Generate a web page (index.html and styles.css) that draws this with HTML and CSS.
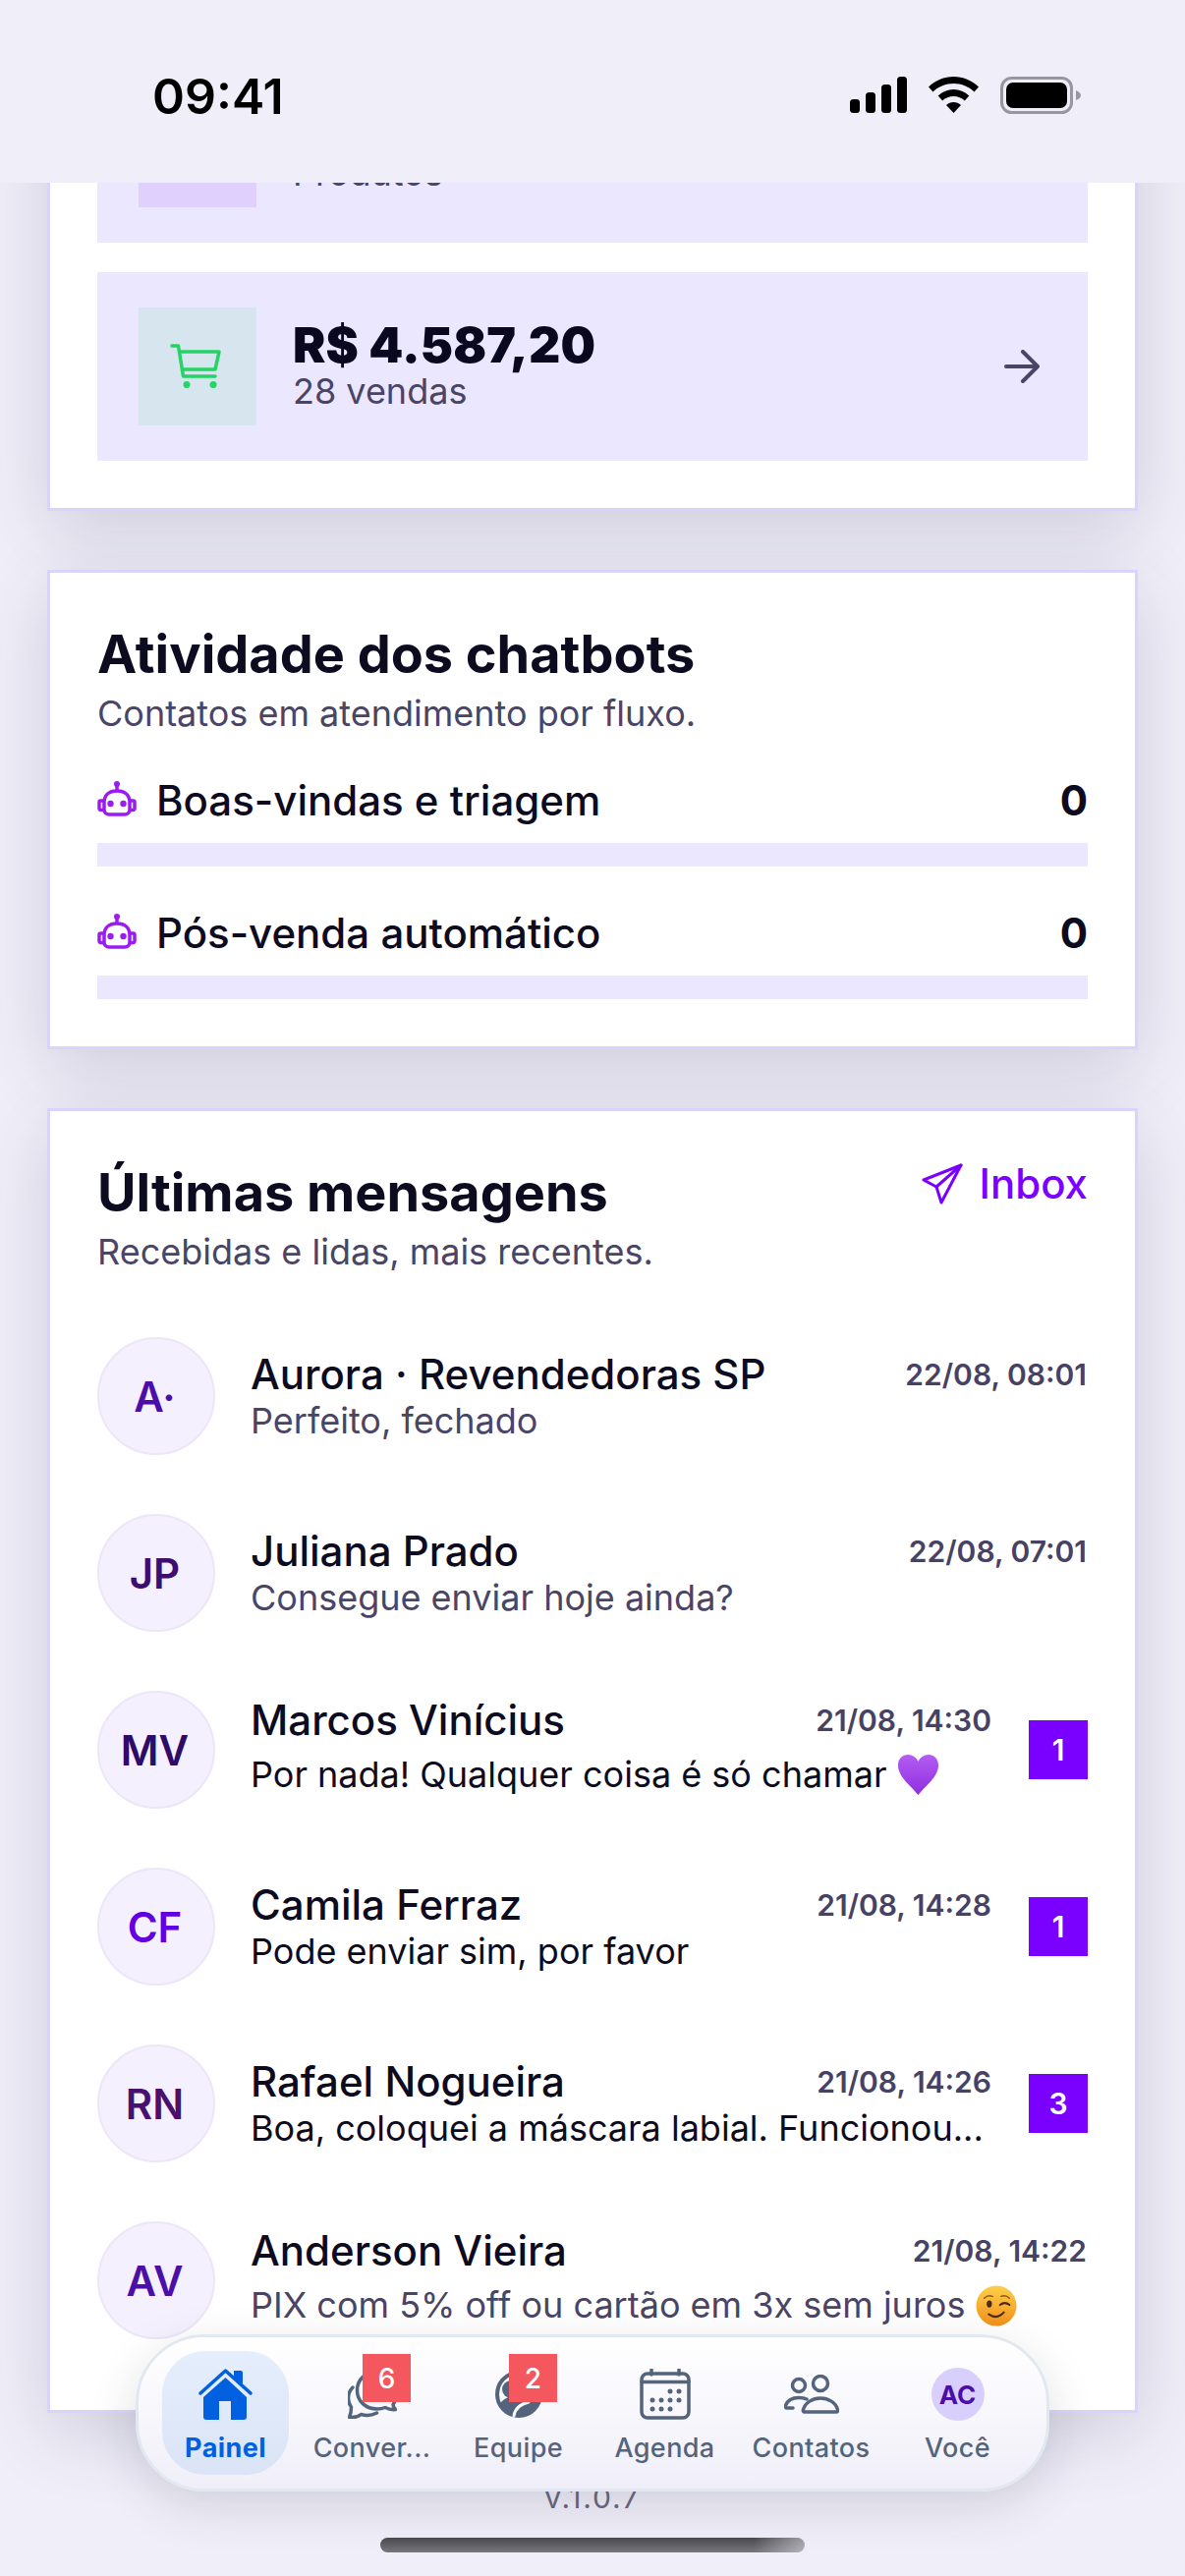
FILE: index.html
```html
<!DOCTYPE html>
<html lang="pt-BR">
  <head>
    <meta charset="utf-8" />
    <meta name="viewport" content="width=device-width, initial-scale=1.0" />
    <title>Painel</title>
    <link rel="stylesheet" href="styles.css">
  </head>
  <body>
    <div class="phone">
      <main class="page">
        <section class="card card-stats">
          <div class="stat">
            <div class="stat-icon stat-icon-purple"></div>
            <div class="stat-text">
              <div class="stat-value">146</div>
              <div class="stat-label">Produtos</div>
            </div>
          </div>
          <div class="stat">
            <div class="stat-icon stat-icon-green">
              <svg class="cart" width="52" height="46" viewBox="0 0 52 46" fill="none" stroke="#25d366" stroke-width="3.500" stroke-linecap="round" stroke-linejoin="round">
                <path d="M2 2h6.500L13.500 33H46" />
                <path d="M9.500 8H50l-4 18H12.500" />
                <circle cx="17" cy="41.500" r="3.500" fill="#25d366" stroke="none" />
                <circle cx="44" cy="41.500" r="3.500" fill="#25d366" stroke="none" />
              </svg>
            </div>
            <div class="stat-text">
              <div class="stat-value">R$ 4.587,20</div>
              <div class="stat-label">28 vendas</div>
            </div>
            <svg class="stat-arrow" width="36" height="34" viewBox="0 0 36 34" fill="none" stroke="#4a4466" stroke-width="4" stroke-linecap="round" stroke-linejoin="round">
              <path d="M2 17h32M19 2l15 15-15 15" />
            </svg>
          </div>
        </section>

        <section class="card card-bots">
          <h2 class="card-title">Atividade dos chatbots</h2>
          <p class="card-sub">Contatos em atendimento por fluxo.</p>
          <div class="bot">
            <div class="bot-row">
              <svg class="bot-icon" width="40" height="36" viewBox="0 0 40 36"><use href="#robot" /></svg>
              <span class="bot-name">Boas-vindas e triagem</span>
              <span class="bot-count">0</span>
            </div>
            <div class="bot-bar"></div>
          </div>
          <div class="bot">
            <div class="bot-row">
              <svg class="bot-icon" width="40" height="36" viewBox="0 0 40 36"><use href="#robot" /></svg>
              <span class="bot-name">Pós-venda automático</span>
              <span class="bot-count">0</span>
            </div>
            <div class="bot-bar"></div>
          </div>
        </section>

        <section class="card card-messages">
          <div class="messages-head">
            <h2 class="card-title">Últimas mensagens</h2>
            <a class="inbox-link">
              <svg width="42" height="42" viewBox="0 0 42 42" fill="none" stroke="#7a00ff" stroke-width="3" stroke-linejoin="round" stroke-linecap="round">
                <path d="M40 2 2 17l13 7 5 16z" />
                <path d="M40 2 15 24" />
              </svg>
              Inbox
            </a>
          </div>
          <p class="card-sub">Recebidas e lidas, mais recentes.</p>

          <ul class="msg-list">
            <li class="msg">
              <div class="avatar avatar-a">A·</div>
              <div class="msg-body">
                <div class="msg-top"><span class="msg-name">Aurora · Revendedoras SP</span><span class="msg-time">22/08, 08:01</span></div>
                <div class="msg-text">Perfeito, fechado</div>
              </div>
            </li>
            <li class="msg">
              <div class="avatar avatar-b">JP</div>
              <div class="msg-body">
                <div class="msg-top"><span class="msg-name">Juliana Prado</span><span class="msg-time">22/08, 07:01</span></div>
                <div class="msg-text">Consegue enviar hoje ainda?</div>
              </div>
            </li>
            <li class="msg unread">
              <div class="avatar avatar-c">MV</div>
              <div class="msg-body">
                <div class="msg-top"><span class="msg-name">Marcos Vinícius</span><span class="msg-time">21/08, 14:30</span></div>
                <div class="msg-text msg-text-tall">Por nada! Qualquer coisa é só chamar
                  <svg class="emoji" width="43" height="43" viewBox="0 0 44 44">
                    <defs>
                      <linearGradient id="heart" x1="0" y1="0" x2="0" y2="1">
                        <stop offset="0" stop-color="#b45cf2" />
                        <stop offset="1" stop-color="#8f2fe0" />
                      </linearGradient>
                    </defs>
                    <path d="M22 43C14 33 1 24 1 12 1 5 6 1 11.500 1 16 1 20 4 22 8c2-4 6-7 10.500-7C38 1 43 5 43 12c0 12-13 21-21 31z" fill="url(#heart)" />
                  </svg>
                </div>
              </div>
              <span class="msg-badge">1</span>
            </li>
            <li class="msg unread">
              <div class="avatar avatar-d">CF</div>
              <div class="msg-body">
                <div class="msg-top"><span class="msg-name">Camila Ferraz</span><span class="msg-time">21/08, 14:28</span></div>
                <div class="msg-text">Pode enviar sim, por favor</div>
              </div>
              <span class="msg-badge">1</span>
            </li>
            <li class="msg unread">
              <div class="avatar avatar-e">RN</div>
              <div class="msg-body">
                <div class="msg-top"><span class="msg-name">Rafael Nogueira</span><span class="msg-time">21/08, 14:26</span></div>
                <div class="msg-text">Boa, coloquei a máscara labial. Funcionou...</div>
              </div>
              <span class="msg-badge">3</span>
            </li>
            <li class="msg">
              <div class="avatar avatar-a">AV</div>
              <div class="msg-body">
                <div class="msg-top"><span class="msg-name">Anderson Vieira</span><span class="msg-time">21/08, 14:22</span></div>
                <div class="msg-text msg-text-tall">PIX com 5% off ou cartão em 3x sem juros
                  <svg class="emoji" width="42" height="42" viewBox="0 0 44 44">
                    <defs>
                      <linearGradient id="face" x1="0" y1="0" x2="0" y2="1">
                        <stop offset="0" stop-color="#fcd04a" />
                        <stop offset="1" stop-color="#f2901c" />
                      </linearGradient>
                    </defs>
                    <circle cx="22" cy="22" r="21.500" fill="url(#face)" />
                    <path d="M9 14q4-4 9-2M27 12q5-2 9 2" fill="none" stroke="#8a5a1c" stroke-width="1.500" stroke-linecap="round" />
                    <ellipse cx="14.500" cy="20" rx="2.800" ry="3.800" fill="#4a2a12" />
                    <path d="M26 21q5-4 10 0" fill="none" stroke="#4a2a12" stroke-width="2.200" stroke-linecap="round" />
                    <path d="M14 31q9 6 16-2" fill="none" stroke="#4a2a12" stroke-width="2.200" stroke-linecap="round" />
                  </svg>
                </div>
              </div>
            </li>
          </ul>
        </section>

        <div class="version">v.1.0.7</div>
      </main>

      <header class="statusbar">
        <span class="clock">09:41</span>
        <div class="status-icons">
          <svg width="58" height="37" viewBox="0 0 58 37" fill="#000">
            <rect x="0" y="23" width="10" height="14" rx="3.500" />
            <rect x="16" y="16" width="10" height="21" rx="3.500" />
            <rect x="32" y="8" width="10" height="29" rx="3.500" />
            <rect x="48" y="0" width="10" height="37" rx="3.500" />
          </svg>
          <svg width="51" height="37" viewBox="0 0 51 37" fill="#000">
            <path d="M25.500 0C35 0 44 3.800 51 10.500l-4.500 5C40.800 10 33.500 7 25.500 7S10.200 10 4.500 15.500L0 10.500C7 3.800 16 0 25.500 0z" />
            <path d="M25.500 13c6 0 11.500 2.300 15.800 6.400l-4.500 5c-3-2.800-7-4.400-11.300-4.400s-8.300 1.600-11.300 4.400l-4.500-5C14 15.300 19.500 13 25.500 13z" />
            <path d="M25.500 26c2.800 0 5.500 1.100 7.500 3l-7.500 8-7.500-8c2-1.900 4.700-3 7.500-3z" />
          </svg>
          <svg width="82" height="38" viewBox="0 0 82 38">
            <rect x="1.500" y="1.500" width="71" height="35" rx="10" fill="none" stroke="#99979e" stroke-width="3" />
            <rect x="6" y="6" width="62" height="26" rx="7" fill="#000" />
            <path d="M77 14c3 1 5 3 5 5s-2 4-5 5z" fill="#99979e" />
          </svg>
        </div>
      </header>

      <nav class="tabbar">
        <a class="tab tab-active">
          <span class="tab-icon">
            <svg width="55" height="52" viewBox="0 0 55 52">
              <path d="M36 2h7a2 2 0 0 1 2 2v12l-9-8z" fill="#0060df" />
              <path d="M2 25 27.500 2 53 25" fill="none" stroke="#0060df" stroke-width="3.500" stroke-linecap="round" stroke-linejoin="round" />
              <path d="M27.500 9 49 29v20a3 3 0 0 1-3 3H33V33H21v19H8a3 3 0 0 1-3-3V29z" fill="#0060df" />
            </svg>
          </span>
          <span class="tab-label">Painel</span>
        </a>
        <a class="tab">
          <span class="tab-icon">
            <svg width="50" height="50" viewBox="0 0 50 50" fill="none" stroke="#53647c" stroke-width="3.500" stroke-linecap="round" stroke-linejoin="round">
              <path d="M30 2C18 2 9.500 10 9.500 21S18 40 30 40c3 0 5.500-.5 8-1.500 3 1.500 7 2.500 10.500 2-1.500-1.500-2.500-3-2.500-5 2.500-3.500 4-8 4-13.500C50 10 41 2 30 2z" />
              <path d="M5 18C2 21 .5 25 .5 29c0 3.500 1 6.500 3 9 0 3.500-.5 7-2 10.500 5 .5 9-.5 12-3 5 1.500 11 1 16-1.500" />
            </svg>
          </span>
          <span class="tab-label">Conver...</span>
          <span class="tab-badge">6</span>
        </a>
        <a class="tab">
          <span class="tab-icon">
            <svg width="48" height="48" viewBox="0 0 48 48">
              <circle cx="24" cy="24" r="22" fill="none" stroke="#53647c" stroke-width="4" />
              <path d="M4 34c5-6 12-9 20-9s15 3 20 9c-4 9-12 13-20 13S8 43 4 34z" fill="#53647c" />
              <circle cx="16" cy="19" r="9" fill="#53647c" />
              <path d="M19 46c1-7 7-12 15-14" fill="none" stroke="#fbfbfe" stroke-width="3" stroke-linecap="round" />
            </svg>
          </span>
          <span class="tab-label">Equipe</span>
          <span class="tab-badge">2</span>
        </a>
        <a class="tab">
          <span class="tab-icon">
            <svg width="52" height="52" viewBox="0 0 52 52" fill="none" stroke="#53647c" stroke-width="3.500" stroke-linecap="round">
              <rect x="2" y="5" width="48" height="45" rx="6" />
              <path d="M2 13.500h48M12 1v5M40 1v5" />
              <g fill="#53647c" stroke="none">
                <circle cx="31" cy="23" r="2.500" /><circle cx="40" cy="23" r="2.500" />
                <circle cx="13" cy="32" r="2.500" /><circle cx="22" cy="32" r="2.500" /><circle cx="31" cy="32" r="2.500" /><circle cx="40" cy="32" r="2.500" />
                <circle cx="13" cy="41" r="2.500" /><circle cx="22" cy="41" r="2.500" /><circle cx="31" cy="41" r="2.500" />
              </g>
            </svg>
          </span>
          <span class="tab-label">Agenda</span>
        </a>
        <a class="tab">
          <span class="tab-icon">
            <svg width="56" height="40" viewBox="0 0 56 40" fill="none" stroke="#53647c" stroke-width="3.500" stroke-linecap="round" stroke-linejoin="round">
              <circle cx="15" cy="11" r="6.500" />
              <circle cx="37" cy="9" r="7.500" />
              <path d="M9 34H3c-1.500 0-2-1-1.500-2.500C3.500 26 9 23.500 15 23.500c3 0 6 .5 8 1.500" />
              <path d="M21 38c-1.500 0-2-1-1.500-2.500 2-7 9.500-11.500 17.500-11.500s15.500 4.500 17.500 11.500c.5 1.500 0 2.500-1.500 2.500z" />
            </svg>
          </span>
          <span class="tab-label">Contatos</span>
        </a>
        <a class="tab">
          <span class="tab-icon">
            <span class="tab-avatar">AC</span>
          </span>
          <span class="tab-label">Você</span>
        </a>
      </nav>

      <div class="home-bar"></div>

      <svg class="defs" width="0" height="0">
        <symbol id="robot" viewBox="0 0 40 36">
          <g fill="none" stroke="#9b1cf0" stroke-width="3.500" stroke-linejoin="round">
            <path d="M20 2v7" />
            <path d="M7 22c0-8 5-12 13-12s13 4 13 12v7a5 5 0 0 1-5 5H12a5 5 0 0 1-5-5z" />
            <path d="M7 20H3.500A1.500 1.500 0 0 0 2 21.500V28a1.500 1.500 0 0 0 1.500 1.500H7M33 20h3.500a1.500 1.500 0 0 1 1.500 1.500V28a1.500 1.500 0 0 1-1.500 1.500H33" />
          </g>
          <g fill="#9b1cf0">
            <circle cx="20" cy="3" r="3" />
            <circle cx="13.500" cy="23" r="3.200" />
            <circle cx="26.500" cy="23" r="3.200" />
          </g>
        </symbol>
      </svg>
    </div>
  </body>
</html>
```

FILE: styles.css
```css
* {
  box-sizing: border-box;
}

html,
body {
  margin: 0;
  padding: 0;
}

body {
  font-family: Inter, "Noto Sans", sans-serif;
  color: #0d0b20;
  background-color: #f0eff9;
}

.phone {
  position: relative;
  width: 1206px;
  height: 2622px;
  overflow: hidden;
  background-color: #f0eff9;
}

.page {
  padding: 4px 48px 0;
  display: flex;
  flex-direction: column;
  gap: 60px;
}

.card {
  background-color: #fff;
  border: 3px solid #d8d4fc;
  padding: 48px;
  box-shadow: 0 20px 70px rgba(30, 25, 60, 0.16);
}

.card-stats {
  display: flex;
  flex-direction: column;
  gap: 30px;
}

.stat {
  height: 192px;
  padding: 0 42px;
  display: flex;
  align-items: center;
  gap: 37px;
  background-color: #ebe7fe;
}

.stat-icon {
  width: 120px;
  height: 120px;
  flex: none;
  display: flex;
  align-items: center;
  justify-content: center;
}

.stat-icon-purple {
  background-color: #e0d0fe;
}

.stat-icon-green {
  background-color: #d7e5ef;
}

.cart {
  margin-right: 4px;
}

.stat-text {
  flex: 1;
}

.stat-value {
  font-size: 50px;
  line-height: 50px;
  font-weight: 900;
  letter-spacing: 0.2px;
  color: #0a0820;
}

.stat-label {
  font-size: 36px;
  line-height: 44px;
  color: #4a4466;
}

.stat-arrow {
  flex: none;
  margin-right: 7px;
}

.card-title {
  margin: 0;
  font-size: 54px;
  line-height: 70px;
  font-weight: 700;
  color: #0d0b20;
}

.card-sub {
  margin: 3px 0 0;
  font-size: 36px;
  line-height: 44px;
  color: #4a4466;
}

.bot {
  margin-top: 36px;
}

.bot + .bot {
  margin-top: 37px;
}

.bot-row {
  display: flex;
  align-items: center;
  gap: 20px;
  height: 60px;
}

.bot-icon {
  flex: none;
  margin-top: -2px;
}

.bot-name {
  flex: 1;
  font-size: 42px;
  font-weight: 450;
}

.bot-count {
  font-size: 42px;
  font-weight: 700;
}

.bot-bar {
  height: 24px;
  margin-top: 14px;
  background-color: #ebe7fe;
}

.messages-head {
  display: flex;
  justify-content: space-between;
  align-items: flex-start;
}

.inbox-link {
  display: flex;
  align-items: center;
  gap: 16px;
  font-size: 42px;
  font-weight: 500;
  color: #7a00ff;
}

.msg-list {
  list-style: none;
  margin: 65px 0 0;
  padding: 0 0 24px;
  display: flex;
  flex-direction: column;
  gap: 60px;
}

.msg {
  display: flex;
  align-items: center;
  height: 120px;
  gap: 36px;
}

.avatar {
  width: 120px;
  height: 120px;
  flex: none;
  padding-right: 3px;
  border: 2px solid #ece6f8;
  border-radius: 50%;
  background-color: #f5f0fe;
  display: flex;
  align-items: center;
  justify-content: center;
  font-size: 42px;
  font-weight: 600;
}

.avatar-a {
  color: #4b0fa8;
}

.avatar-b {
  color: #3f0d6e;
}

.avatar-c {
  color: #2e0b66;
}

.avatar-d {
  color: #6200e0;
}

.avatar-e {
  color: #4a1070;
}

.msg-body {
  flex: 1;
  min-width: 0;
  padding-right: 1px;
}

.msg-top {
  display: flex;
  justify-content: space-between;
  align-items: center;
}

.msg-name {
  font-size: 42px;
  line-height: 50px;
  font-weight: 450;
}

.msg-time {
  font-size: 30px;
  font-weight: 600;
  color: #474264;
}

.msg-text {
  font-size: 36px;
  line-height: 44px;
  color: #4a4466;
  white-space: nowrap;
}

.msg-text-tall {
  line-height: 60px;
}

.unread .msg-text {
  color: #0d0b20;
}

.emoji {
  vertical-align: -9px;
}

.msg-badge {
  width: 60px;
  height: 60px;
  flex: none;
  margin-left: 1px;
  display: flex;
  align-items: center;
  justify-content: center;
  background-color: #7a00ff;
  color: #fff;
  font-size: 30px;
  font-weight: 600;
}

.version {
  margin-top: -51px;
  padding-top: 60px;
  text-align: center;
  font-size: 30px;
  line-height: 34px;
  letter-spacing: 1.800px;
  color: #6b6880;
}

.statusbar {
  position: absolute;
  top: 0;
  left: 0;
  right: 0;
  height: 186px;
  padding: 72px 106px 0 155px;
  display: flex;
  justify-content: space-between;
  align-items: flex-start;
  background-color: #f0eff9;
}

.clock {
  font-size: 50px;
  line-height: 52px;
  font-weight: 600;
  color: #000;
}

.status-icons {
  display: flex;
  gap: 22px;
  padding-top: 6px;
}

.tabbar {
  position: absolute;
  left: 138px;
  top: 2376px;
  width: 930px;
  height: 160px;
  padding: 14px 16px 14px 24px;
  display: flex;
  border: 3px solid #e2e8f0;
  border-radius: 70px;
  background: linear-gradient(#fff, #f0eff9);
  box-shadow: 0 16px 50px rgba(30, 25, 60, 0.14);
}

.tab {
  position: relative;
  width: 149px;
  flex: none;
  padding-top: 16px;
  display: flex;
  flex-direction: column;
  align-items: center;
  color: #53647c;
}

.tab-icon {
  height: 56px;
  display: flex;
  align-items: center;
  justify-content: center;
}

.tab-active {
  width: 129px;
  margin-right: 10px;
  border-radius: 44px;
  background: linear-gradient(#e5eefc, #dbe4f6);
  color: #0060df;
}

.tab-label {
  margin-top: 11px;
  font-size: 27px;
  line-height: 32px;
  font-weight: 500;
  letter-spacing: 0.4px;
  white-space: nowrap;
}

.tab-active .tab-label {
  font-weight: 700;
}

.tab-badge {
  position: absolute;
  top: 3px;
  right: 35px;
  width: 49px;
  height: 49px;
  display: flex;
  align-items: center;
  justify-content: center;
  background-color: #f4585e;
  color: #fff;
  font-size: 28px;
  font-weight: 500;
}

.tab-avatar {
  width: 54px;
  height: 54px;
  border-radius: 50%;
  background-color: #d9cffc;
  color: #4b0fa8;
  display: flex;
  align-items: center;
  justify-content: center;
  font-size: 26px;
  font-weight: 700;
}

.home-bar {
  position: absolute;
  left: 387px;
  top: 2583px;
  width: 432px;
  height: 15px;
  border-radius: 8px;
  background: linear-gradient(90deg, transparent 88%, rgba(240, 239, 249, 0.5)), linear-gradient(#49494d, #77777c);
}

.defs {
  position: absolute;
}
```
